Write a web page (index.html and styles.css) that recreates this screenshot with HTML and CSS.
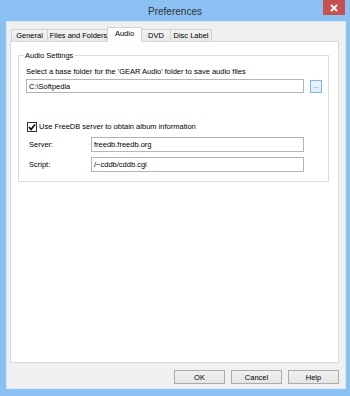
FILE: index.html
```html
<!DOCTYPE html>
<html lang="en">
<head>
  <meta charset="UTF-8">
  <title>Preferences</title>
  <link rel="stylesheet" href="styles.css">
</head>
<body>
  <div class="window">
    <div class="titlebar">
      <span></span>
      <span class="title">Preferences</span>
      <span class="close">
        <svg width="8" height="8" viewBox="0 0 8 8"><path d="M1 1L7 7M7 1L1 7" stroke="#fff" stroke-width="1.8"/></svg>
      </span>
    </div>

    <div class="client">
      <!-- tab strip -->
      <div class="tabs">
        <span class="tab tab-general">General</span>
        <span class="tab tab-files">Files and Folders</span>
        <span class="tab tab-audio active">Audio</span>
        <span class="tab tab-dvd">DVD</span>
        <span class="tab tab-disc">Disc Label</span>
      </div>

      <div class="panel">
        <fieldset class="group">
          <legend>Audio Settings</legend>
          <div class="hint">Select a base folder for the 'GEAR Audio' folder to save audio files</div>
          <div class="row">
            <input class="field folder" type="text" value="C:\Softpedia">
            <button class="browse">...</button>
          </div>

          <label class="check">
            <span class="box">
              <svg width="8" height="8" viewBox="0 0 8 8"><path d="M1 4L3 6.5L7 1.5" fill="none" stroke="#000" stroke-width="1.6"/></svg>
            </span>
            Use FreeDB server to obtain album information
          </label>

          <div class="row server">
            <span class="lbl">Server:</span>
            <input class="field short" type="text" value="freedb.freedb.org">
          </div>
          <div class="row script">
            <span class="lbl">Script:</span>
            <input class="field short" type="text" value="/~cddb/cddb.cgi">
          </div>
        </fieldset>
      </div>

      <div class="buttons">
        <button class="btn">OK</button>
        <button class="btn">Cancel</button>
        <button class="btn">Help</button>
      </div>
    </div>
  </div>
</body>
</html>
```

FILE: styles.css
```css
/* Base */
* {
  margin: 0;
  padding: 0;
  box-sizing: border-box;
}
body {
  background: #8bc1f2;
  font-family: "Liberation Sans", Arial, sans-serif;
  font-size: 7.5px;
  color: #000;
}
.window {
  width: 350px;
  height: 396px;
  background: #8bc1f2;
}

/* Title bar */
.titlebar {
  height: 22px;
  display: grid;
  grid-template-columns: 1fr auto 1fr;
  align-items: center;
}
.title {
  font-size: 10px;
  color: #333;
  padding-top: 1px;
}
.close {
  justify-self: end;
  align-self: start;
  width: 22px;
  height: 15px;
  margin-right: 5px;
  background: #c75050;
  display: flex;
  align-items: center;
  justify-content: center;
}

/* Client area */
.client {
  height: 366px;
  margin: 0 5px 0 7px;
  background: #f0f0f0;
  box-shadow: 0 0 0 1px #d6e9fa;
  display: flex;
  flex-direction: column;
  padding: 5px 6px 4px 3px;
}
.tabs {
  display: flex;
  align-items: flex-end;
  height: 14px;
  padding-left: 1px;
}
.tab {
  height: 12px;
  line-height: 11px;
  text-align: center;
  border: 1px solid #d2d2d2;
  border-bottom: none;
  background: linear-gradient(#f3f3f3, #e7e7e7);
  margin-right: -1px;
  white-space: nowrap;
}
.tab-general { width: 37px; }
.tab-files { width: 63px; }
.tab-audio { width: 35px; }
.tab-dvd { width: 30px; }
.tab-disc { width: 42px; }
.tab.active {
  height: 15px;
  line-height: 12px;
  background: #fff;
  margin: 0 -1px -1px -2px;
  position: relative;
  z-index: 1;
}
.panel {
  flex: 1;
  background: #fff;
  border: 1px solid #d9d9d9;
  padding: 9px 9px 0 7px;
}

/* Group box */
.group {
  border: 1px solid #dcdcdc;
  padding: 0 0 9px 7px;
  min-width: 0;
}
.group legend {
  line-height: 9px;
  padding: 0 1px;
  margin-left: -2px;
  color: #000;
}
.hint {
  line-height: 10px;
  margin-top: 7px;
}
.row {
  display: flex;
  align-items: center;
  margin-top: 2px;
}
.field {
  height: 14px;
  border: 1px solid #b5b5b5;
  background: #fff;
  font: inherit;
  color: #000;
  padding: 0 2px;
  outline: none;
}
.folder {
  width: 278px;
}
.short {
  width: 213px;
  height: 15px;
}
.browse {
  width: 12px;
  height: 13px;
  margin-left: 6px;
  border: 1px solid #7eb4ea;
  background: linear-gradient(#ecf4fc, #dcecfc);
  font: inherit;
  font-size: 6px;
  line-height: 10px;
  color: #333;
}
.check {
  display: flex;
  align-items: center;
  gap: 2px;
  height: 11px;
  margin-top: 28px;
  padding-left: 1px;
}
.box {
  width: 10px;
  height: 10px;
  border: 1px solid #333;
  background: #fff;
  display: flex;
  align-items: center;
  justify-content: center;
}
.server {
  margin-top: 5px;
}
.script {
  margin-top: 5px;
}
.lbl {
  width: 65px;
  padding-left: 3px;
}

/* Bottom buttons */
.buttons {
  display: flex;
  justify-content: flex-end;
  gap: 6px;
  padding-top: 7px;
}
.btn {
  width: 51px;
  height: 14px;
  border: 1px solid #acacac;
  background: linear-gradient(#f0f0f0, #e5e5e5);
  font: inherit;
  color: #000;
}
```
